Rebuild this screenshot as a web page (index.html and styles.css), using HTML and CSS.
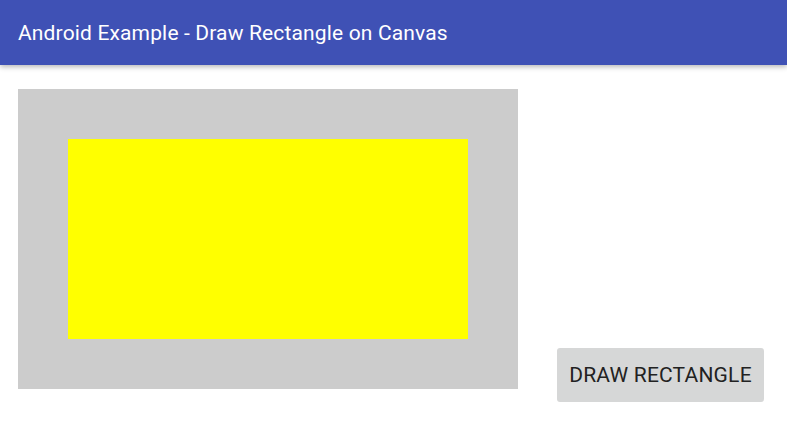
FILE: index.html
```html
<!DOCTYPE html>
<html lang="en">
<head>
    <meta charset="UTF-8">
    <meta name="viewport" content="width=device-width, initial-scale=1.0">
    <title>Draw Rectangle on Canvas</title>
    <link rel="stylesheet" href="styles.css">
</head>
<body>
    <div class="app-bar">
        <h1>Android Example - Draw Rectangle on Canvas</h1>
    </div>
    <div class="content">
        <div class="canvas-box">
            <div class="rect"></div>
        </div>
        <button type="button" class="draw-btn">DRAW RECTANGLE</button>
    </div>
</body>
</html>
```

FILE: styles.css
```css
body {
    font-family: Roboto, "Noto Sans", sans-serif;
    margin: 0;
    padding: 0;
    background: #fff;
    color: #222;
}
.app-bar {
    position: relative;
    background: #3F51B5;
    color: white;
    height: 65px;
    padding: 0 18px;
    display: flex;
    align-items: center;
    box-shadow: 0 2px 5px rgba(0, 0, 0, 0.28);
}
.app-bar h1 {
    margin: 0;
    font-size: 21px;
    font-weight: 400;
    letter-spacing: 0.15px;
    line-height: 1;
    padding-top: 1px;
}
.content {
    display: flex;
    gap: 39px;
    padding: 24px 18px;
}
.canvas-box {
    width: 500px;
    height: 300px;
    background: #ccc;
    padding: 50px;
    box-sizing: border-box;
}
.rect {
    width: 100%;
    height: 100%;
    background: #ff0;
}
.draw-btn {
    margin-top: 259px;
    width: 207px;
    height: 54px;
    border: none;
    border-radius: 3px;
    background: #d6d7d7;
    color: #222;
    font-family: Roboto, sans-serif;
    font-size: 21px;
    letter-spacing: 0.2px;
    padding: 0;
}
```
